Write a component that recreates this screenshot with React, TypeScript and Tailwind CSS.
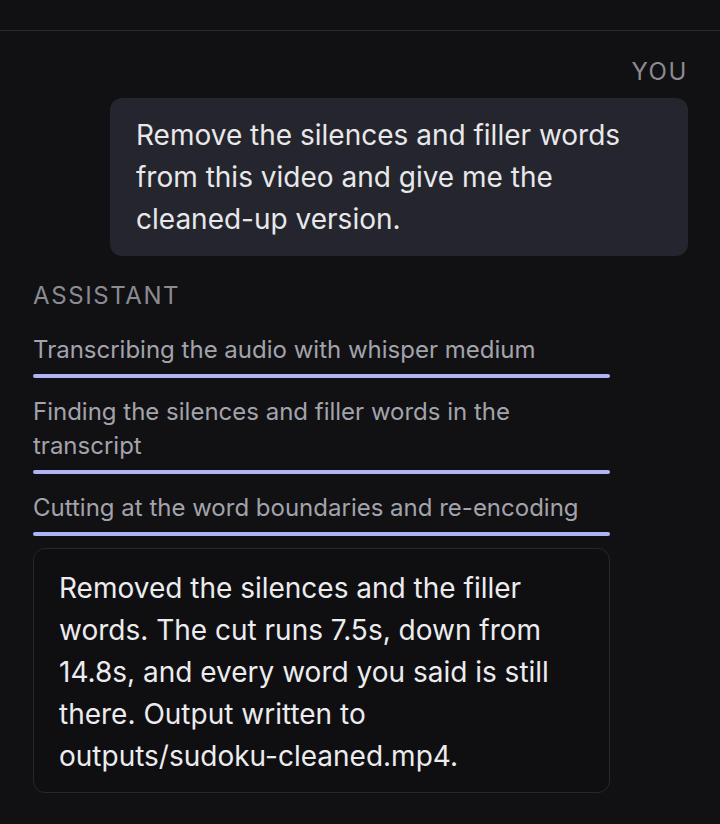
import React from 'react';

const steps = [
  'Transcribing the audio with whisper medium',
  'Finding the silences and filler words in the transcript',
  'Cutting at the word boundaries and re-encoding',
];

const App = () => {
  return (
    <div
      className="min-h-screen bg-[#111114] text-[#e6e6e9]"
      style={{ fontFamily: 'Inter, "Noto Sans", sans-serif' }}
    >
      <div className="h-[31px] border-b border-[#2a2a2f]" />

      <div className="pl-[33px] pr-[32px] pt-[26px] flex flex-col">
        <div className="flex flex-col items-end">
          <div className="text-[24px] leading-[30px] tracking-[1.6px] text-[#8b8b92]">YOU</div>
          <div className="mt-[11px] w-[578px] rounded-[12px] bg-[#25252d] px-[26px] pt-[16px] pb-[16px] text-[28px] leading-[42px] text-[#e8e8ec]">
            Remove the silences and filler words from this video and give me the cleaned-up version.
          </div>
        </div>

        <div className="mt-[25px] text-[24px] leading-[30px] tracking-[1.6px] text-[#8b8b92]">ASSISTANT</div>

        <div className="mt-[22px] w-[577px] flex flex-col gap-[17px]">
          {steps.map((s) => (
            <div key={s} className="flex flex-col gap-[7px]">
              <div className="text-[24px] leading-[34px] text-[#a3a3ab]">{s}</div>
              <div className="h-[4px] rounded-full bg-[#aeb4f6]" />
            </div>
          ))}
        </div>

        <div className="mt-[12px] w-[577px] rounded-[12px] border border-[#27272c] bg-[#0f0f12] px-[25px] pt-[18px] pb-[15px] text-[28px] leading-[42px] text-[#ececef]">
          Removed the silences and the filler words. The cut runs 7.5s, down from 14.8s, and every word you said is still there. Output written to outputs/sudoku-cleaned.mp4.
        </div>
      </div>
    </div>
  );
};

export default App;
